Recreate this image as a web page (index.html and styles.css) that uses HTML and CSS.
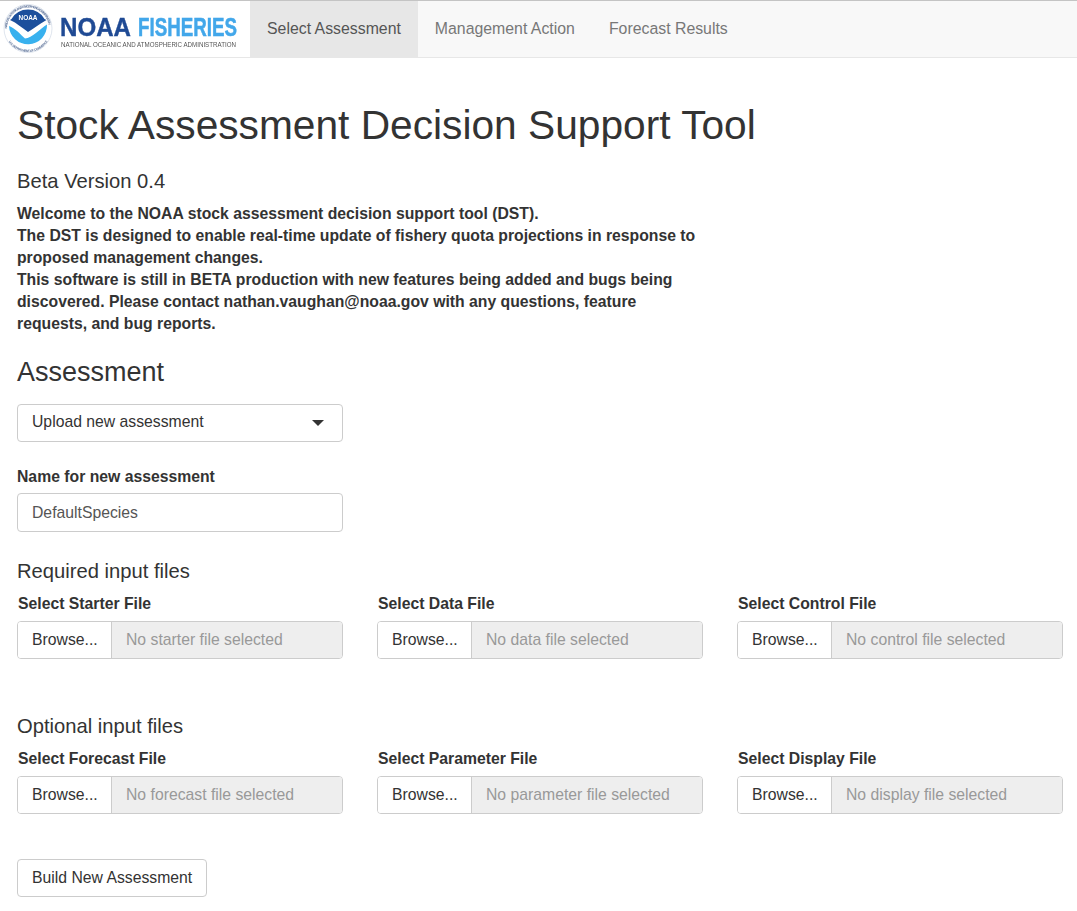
FILE: index.html
```html
<!DOCTYPE html>
<html lang="en">
	<head>
		<meta charset="utf-8">
		<title>Stock Assessment Decision Support Tool</title>
		<link rel="stylesheet" href="styles.css">
	</head>
	<body>
		<nav class="navbar">
			<div class="brand">
				<svg class="logo" width="250" height="56" viewBox="0 0 250 56">
					<defs>
						<path id="ring-top" d="M7 27.500 A21 21 0 0 1 49 27.500"/>
						<path id="ring-bottom" d="M4.500 27.500 A23.500 23.500 0 0 0 51.500 27.500"/>
					</defs>
					<circle cx="28" cy="27.500" r="24" fill="#ffffff" stroke="#c9d3e2" stroke-width="0.6"/>
					<text class="ring-text"><textPath href="#ring-top" textLength="62">NATIONAL OCEANIC AND ATMOSPHERIC ADMINISTRATION</textPath></text>
					<text class="ring-text"><textPath href="#ring-bottom" startOffset="14" textLength="46">U.S. DEPARTMENT OF COMMERCE</textPath></text>
					<path d="M11.500 18 A19 19 0 0 1 44.500 18 L46.500 19 C39 23 33 28 28 31 C22 27 17 22 10 19 Z" fill="#1c4f9c"/>
					<path d="M9 25 C15 27 20 33 25 37.500 C32 37 40 28 47 23.500 A19 19 0 0 1 9 25 Z" fill="#38b1ee"/>
					<text class="seal-text" x="28" y="19" text-anchor="middle" textLength="19" lengthAdjust="spacingAndGlyphs">NOAA</text>
					<text class="logo-noaa" x="60" y="35" textLength="71" lengthAdjust="spacingAndGlyphs">NOAA</text>
					<text class="logo-fisheries" x="138" y="35" textLength="99" lengthAdjust="spacingAndGlyphs">FISHERIES</text>
					<text class="logo-sub" x="61" y="46" textLength="175" lengthAdjust="spacingAndGlyphs">NATIONAL OCEANIC AND ATMOSPHERIC ADMINISTRATION</text>
				</svg>
			</div>
			<ul class="nav-tabs">
				<li class="active">Select Assessment</li>
				<li>Management Action</li>
				<li>Forecast Results</li>
			</ul>
		</nav>

		<div class="page">
			<h1>Stock Assessment Decision Support Tool</h1>
			<h4 class="version">Beta Version 0.4</h4>
			<p class="intro">Welcome to the NOAA stock assessment decision support tool (DST).<br>
			The DST is designed to enable real-time update of fishery quota projections in response to proposed management changes.<br>
			This software is still in BETA production with new features being added and bugs being discovered. Please contact nathan.vaughan@noaa.gov with any questions, feature requests, and bug reports.</p>

			<h3>Assessment</h3>
			<div class="select-box">
				<span class="select-value">Upload new assessment</span>
				<span class="caret"></span>
			</div>

			<label class="field-label name-label">Name for new assessment</label>
			<div class="text-box">DefaultSpecies</div>

			<h4 class="group-title">Required input files</h4>
			<div class="file-row">
				<div class="file-col">
					<label class="file-label">Select Starter File</label>
					<div class="file-input"><span class="browse">Browse...</span><span class="file-name">No starter file selected</span></div>
				</div>
				<div class="file-col">
					<label class="file-label">Select Data File</label>
					<div class="file-input"><span class="browse">Browse...</span><span class="file-name">No data file selected</span></div>
				</div>
				<div class="file-col">
					<label class="file-label">Select Control File</label>
					<div class="file-input"><span class="browse">Browse...</span><span class="file-name">No control file selected</span></div>
				</div>
			</div>

			<h4 class="group-title optional">Optional input files</h4>
			<div class="file-row">
				<div class="file-col">
					<label class="file-label">Select Forecast File</label>
					<div class="file-input"><span class="browse">Browse...</span><span class="file-name">No forecast file selected</span></div>
				</div>
				<div class="file-col">
					<label class="file-label">Select Parameter File</label>
					<div class="file-input"><span class="browse">Browse...</span><span class="file-name">No parameter file selected</span></div>
				</div>
				<div class="file-col">
					<label class="file-label">Select Display File</label>
					<div class="file-input"><span class="browse">Browse...</span><span class="file-name">No display file selected</span></div>
				</div>
			</div>

			<button class="btn-build">Build New Assessment</button>
		</div>
	</body>
</html>
```

FILE: styles.css
```css
html, body {
	background: #ffffff;
}
body {
	margin: 0;
	font-family: "Liberation Sans", Arial, sans-serif;
	font-size: 15.75px;
	line-height: 22px;
	color: #333333;
}

.navbar {
	display: flex;
	height: 56px;
	background: #f8f8f8;
	border-top: 1px solid #c4c4c4;
	border-bottom: 1px solid #e7e7e7;
}
.brand {
	width: 250px;
	height: 56px;
	background: #ffffff;
}
.logo {
	display: block;
	overflow: visible;
	filter: blur(0.35px);
}
.ring-text {
	font-size: 3.2px;
	font-weight: bold;
	fill: #5b7198;
}
.seal-text {
	font-size: 7.500px;
	font-weight: bold;
	fill: #ffffff;
}
.logo-noaa {
	font-size: 26.500px;
	font-weight: bold;
	fill: #1f4a94;
	stroke: #1f4a94;
	stroke-width: 0.4px;
}
.logo-fisheries {
	font-size: 26.500px;
	font-weight: bold;
	fill: #42a7ea;
	stroke: #42a7ea;
	stroke-width: 0.5px;
}
.logo-sub {
	font-size: 6.800px;
	fill: #555555;
}

.nav-tabs {
	display: flex;
	list-style: none;
	margin: 0;
	padding: 0;
	font-size: 15.85px;
}
.nav-tabs li {
	padding: 17px 17px;
	line-height: 22px;
	color: #777777;
}
.nav-tabs li.active {
	background: #e7e7e7;
	color: #555555;
}

.page {
	padding: 0 14px 14px 17px;
}
h1 {
	margin: 43px 0 0;
	font-size: 40.700px;
	line-height: 48px;
	font-weight: 500;
}
.version {
	margin: 20px 0 0;
	font-size: 20.200px;
	line-height: 24px;
	font-weight: 500;
}
.intro {
	margin: 10px 0 0;
	width: 690px;
	font-weight: bold;
}
h3 {
	margin: 21px 0 0;
	font-size: 27px;
	line-height: 32px;
	font-weight: 500;
}
.select-box, .text-box {
	display: flex;
	align-items: center;
	justify-content: space-between;
	box-sizing: border-box;
	width: 326px;
	border: 1px solid #cccccc;
	border-radius: 4px;
	padding: 0 14px;
}
.select-box {
	height: 38px;
	margin-top: 16px;
}
.select-value {
	padding-bottom: 2px;
}
.caret {
	width: 0;
	height: 0;
	border-top: 6px solid #333333;
	border-left: 6px solid transparent;
	border-right: 6px solid transparent;
	margin-right: 4px;
}
.field-label, .file-label {
	display: block;
	font-weight: bold;
}
.name-label {
	margin-top: 24px;
}
.text-box {
	height: 39px;
	margin-top: 5px;
	color: #555555;
}
.group-title {
	margin: 27px 0 0;
	font-size: 20.200px;
	line-height: 24px;
	font-weight: 500;
}
.group-title.optional {
	margin-top: 55px;
}
.file-row {
	display: flex;
	gap: 34px;
	margin-top: 11px;
}
.file-col {
	width: 326px;
}
.file-label {
	padding-left: 1px;
	line-height: 20px;
}
.file-input {
	display: flex;
	height: 38px;
	box-sizing: border-box;
	margin-top: 7px;
	border: 1px solid #cccccc;
	border-radius: 4px;
	overflow: hidden;
}
.browse {
	width: 94px;
	box-sizing: border-box;
	padding-left: 14px;
	line-height: 35px;
	background: #ffffff;
	border-right: 1px solid #cccccc;
}
.file-name {
	flex: 1;
	padding-left: 14px;
	line-height: 35px;
	background: #eeeeee;
	color: #999999;
}
.btn-build {
	display: block;
	margin-top: 45px;
	height: 38px;
	padding: 0 14px;
	background: #ffffff;
	border: 1px solid #cccccc;
	border-radius: 4px;
	font: inherit;
	color: #333333;
}
```
